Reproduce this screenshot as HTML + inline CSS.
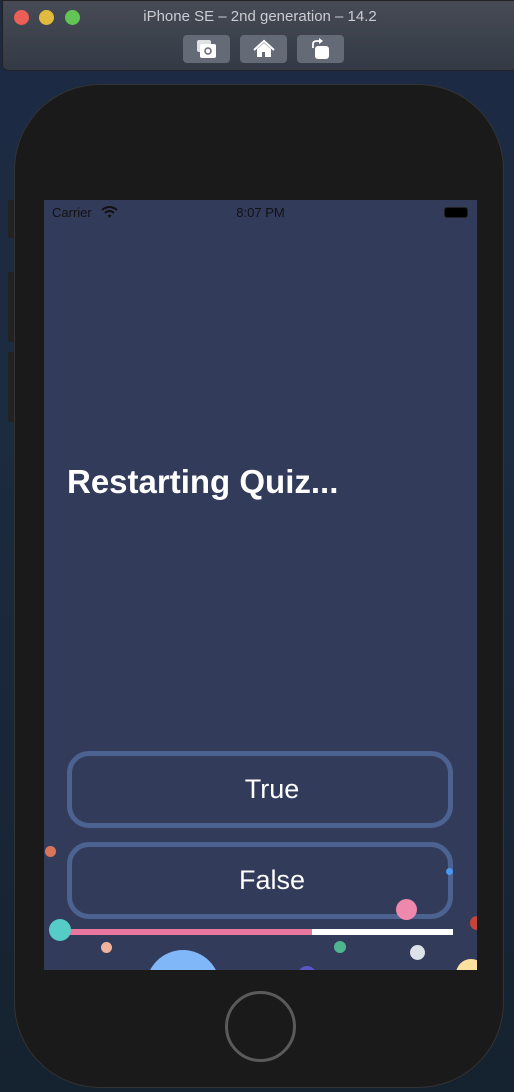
<!DOCTYPE html><html><head><style>
*{margin:0;padding:0;box-sizing:border-box}
body{width:514px;height:1092px;overflow:hidden;background:linear-gradient(180deg,#1d2a44 0%,#1b2b40 40%,#15222f 100%);font-family:"Liberation Sans",sans-serif;position:relative}
.tb{position:absolute;left:2px;top:0;width:520px;height:71px;background:linear-gradient(#464b55,#343a45);border-radius:0 0 6px 6px;border:1px solid #222}
.dot{position:absolute;top:9px;width:15px;height:15px;border-radius:50%}
.title{position:absolute;top:7px;left:0;width:514px;text-align:center;color:#c9ccd2;font-size:15px}
.btn{position:absolute;top:34px;width:47px;height:28px;background:#646a76;border-radius:4px}
.phone{position:absolute;left:14px;top:84px;width:490px;height:1004px;background:#1a1a1a;border-radius:86px;border:1px solid #333}
.screen{position:absolute;left:44px;top:200px;width:433px;height:770px;background:#333b5b;overflow:hidden}
.ab{position:absolute;left:23px;width:386px;height:77px;border:5px solid #4c6391;border-radius:22px;color:#fff;font-size:27px;text-align:center;line-height:67px;padding-left:24px}
.c{position:absolute;border-radius:50%}
.side{position:absolute;left:8px;width:7px;background:#222;border-radius:2px}
</style></head><body>
<div class="tb">
<div class="dot" style="left:11px;background:#ec5f57"></div>
<div class="dot" style="left:36px;background:#e0bb3e"></div>
<div class="dot" style="left:62px;background:#62c454"></div>
<div class="title">iPhone SE – 2nd generation – 14.2</div>
<div class="btn" style="left:180px"><svg width="47" height="28"><rect x="14" y="5" width="14" height="12" rx="2" fill="#fff" opacity=".8"/><rect x="17" y="9" width="16" height="14" rx="2" fill="#fff"/><circle cx="25" cy="16" r="3" fill="none" stroke="#646a76" stroke-width="1.5"/></svg></div>
<div class="btn" style="left:237px"><svg width="47" height="28"><path d="M14 15 L24 6 L34 15" fill="none" stroke="#fff" stroke-width="2"/><path d="M17 14 L24 8 L31 14 V22 H17Z" fill="#fff"/><rect x="22" y="17" width="3" height="5" fill="#646a76"/></svg></div>
<div class="btn" style="left:294px"><svg width="47" height="28"><rect x="18" y="11" width="14" height="13" rx="3" fill="#fff"/><path d="M16 13 V9 Q16 6 20 6 H23" fill="none" stroke="#fff" stroke-width="1.8"/><path d="M22 3 L26 6 L22 9Z" fill="#fff"/></svg></div>
</div>
<div class="side" style="top:200px;height:38px"></div>
<div class="side" style="top:272px;height:70px"></div>
<div class="side" style="top:352px;height:70px"></div>
<div class="phone"></div>
<div class="screen">
<div style="position:absolute;left:8px;top:5px;font-size:13px;color:#111">Carrier</div>
<svg style="position:absolute;left:57px;top:6px" width="17" height="12"><path d="M1 4 Q8.5 -2 16 4" fill="none" stroke="#111" stroke-width="2"/><path d="M4 7 Q8.5 3 13 7" fill="none" stroke="#111" stroke-width="2"/><path d="M6.5 9.5 L8.5 12 L10.5 9.5 Q8.5 8 6.5 9.5Z" fill="#111"/></svg>
<div style="position:absolute;left:0;width:433px;top:5px;text-align:center;font-size:13px;color:#111">8:07 PM</div>
<div style="position:absolute;left:400px;top:7px;width:24px;height:11px;border:1px solid #222;border-radius:3px;background:#000"></div>
<div style="position:absolute;left:23px;top:263px;font-size:33px;font-weight:bold;color:#fff">Restarting Quiz...</div>
<div class="ab" style="top:551px">True</div>
<div class="ab" style="top:642px">False</div>
<div style="position:absolute;left:23px;top:729px;width:386px;height:6px;background:#fff"></div>
<div style="position:absolute;left:23px;top:729px;width:245px;height:6px;background:#e8789f"></div>
<div class="c" style="left:5px;top:719px;width:22px;height:22px;background:#56cdc4"></div>
<div class="c" style="left:1px;top:646px;width:11px;height:11px;background:#d9765a"></div>
<div class="c" style="left:57px;top:742px;width:11px;height:11px;background:#f0b39c"></div>
<div class="c" style="left:102px;top:750px;width:74px;height:74px;background:#80b7f8"></div>
<div class="c" style="left:290px;top:741px;width:12px;height:12px;background:#4eb58f"></div>
<div class="c" style="left:352px;top:699px;width:21px;height:21px;background:#ee88ad"></div>
<div class="c" style="left:366px;top:745px;width:15px;height:15px;background:#dde1e8"></div>
<div class="c" style="left:402px;top:668px;width:7px;height:7px;background:#4a97ee"></div>
<div class="c" style="left:426px;top:716px;width:14px;height:14px;background:#c5443a"></div>
<div class="c" style="left:412px;top:759px;width:30px;height:30px;background:#fbe0a0"></div>
<div class="c" style="left:254px;top:766px;width:18px;height:18px;background:#5a56c8"></div>
</div>
<div style="position:absolute;left:225px;top:991px;width:71px;height:71px;border-radius:50%;border:3px solid #5a5a5a"></div>
</body></html>
